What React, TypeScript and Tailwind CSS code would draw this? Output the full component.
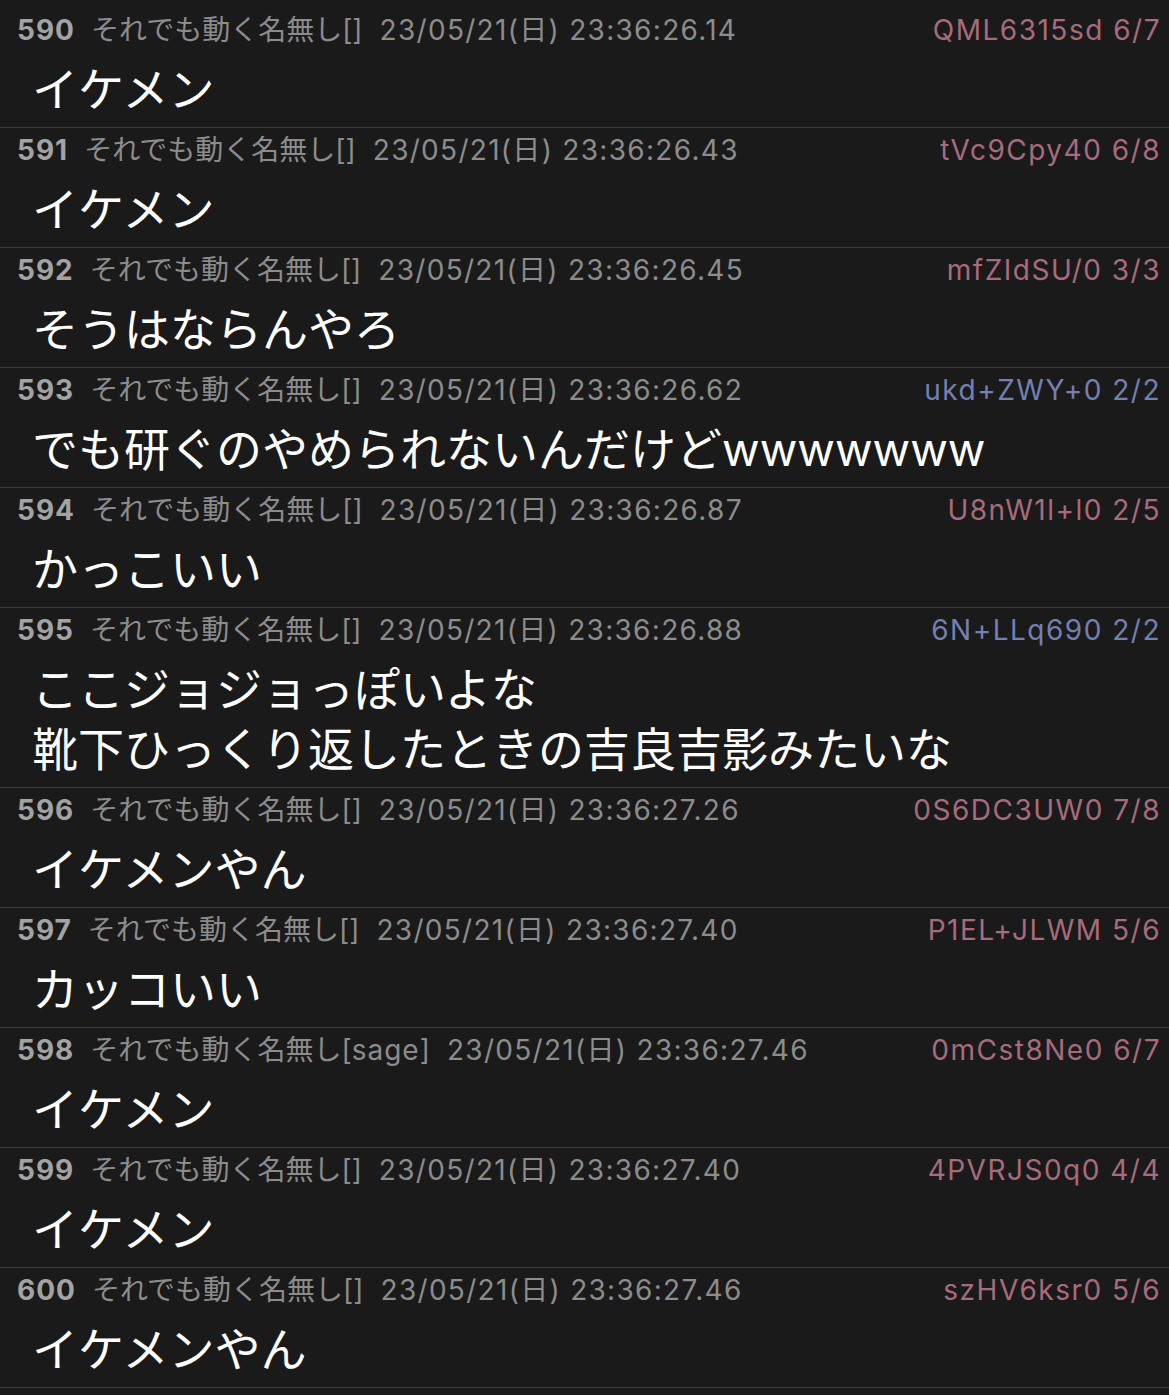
import React from "react";

type Post = {
  no: number;
  mail?: string;
  date: string;
  id: string;
  count: string;
  blue?: boolean;
  lines: string[];
};

const posts: Post[] = [
  { no: 590, date: "23/05/21(日) 23:36:26.14", id: "QML6315sd", count: "6/7", lines: ["イケメン"] },
  { no: 591, date: "23/05/21(日) 23:36:26.43", id: "tVc9Cpy40", count: "6/8", lines: ["イケメン"] },
  { no: 592, date: "23/05/21(日) 23:36:26.45", id: "mfZIdSU/0", count: "3/3", lines: ["そうはならんやろ"] },
  { no: 593, date: "23/05/21(日) 23:36:26.62", id: "ukd+ZWY+0", count: "2/2", blue: true, lines: ["でも研ぐのやめられないんだけどwwwwwww"] },
  { no: 594, date: "23/05/21(日) 23:36:26.87", id: "U8nW1l+l0", count: "2/5", lines: ["かっこいい"] },
  { no: 595, date: "23/05/21(日) 23:36:26.88", id: "6N+LLq690", count: "2/2", blue: true, lines: ["ここジョジョっぽいよな", "靴下ひっくり返したときの吉良吉影みたいな"] },
  { no: 596, date: "23/05/21(日) 23:36:27.26", id: "0S6DC3UW0", count: "7/8", lines: ["イケメンやん"] },
  { no: 597, date: "23/05/21(日) 23:36:27.40", id: "P1EL+JLWM", count: "5/6", lines: ["カッコいい"] },
  { no: 598, mail: "sage", date: "23/05/21(日) 23:36:27.46", id: "0mCst8Ne0", count: "6/7", lines: ["イケメン"] },
  { no: 599, date: "23/05/21(日) 23:36:27.40", id: "4PVRJS0q0", count: "4/4", lines: ["イケメン"] },
  { no: 600, date: "23/05/21(日) 23:36:27.46", id: "szHV6ksr0", count: "5/6", lines: ["イケメンやん"] },
];

const font = { fontFamily: "Inter, 'Noto Sans CJK JP', sans-serif" };

function Row({ p }: { p: Post }) {
  return (
    <div className="border-b border-[#3a3a3a] pt-[4px] pb-[8px]">
      <div className="flex h-[36px] items-center pl-[17px] pr-[8px] text-[28px] leading-[36px]">
        <span className="font-bold tracking-[1px] text-[#a3a3a3]">{p.no}</span>
        <span className="ml-[16px] text-[#8c8c8c]">
          それでも動く名無し[<span className="tracking-[1px]">{p.mail ?? ""}</span>]
        </span>
        <span className="ml-[17px] tracking-[1.3px] text-[#8c8c8c]">{p.date}</span>
        <span className={"ml-auto tracking-[1.5px] " + (p.blue ? "text-[#7280b3]" : "text-[#a86a7c]")}>
          {p.id} {p.count}
        </span>
      </div>
      <div className="mt-[11px] pl-[32px] text-[46px] leading-[60px] text-white">
        {p.lines.map((l, i) => (
          <div key={i} className="whitespace-nowrap">{l}</div>
        ))}
      </div>
    </div>
  );
}

export default function App() {
  return (
    <div className="min-h-[1395px] w-[1169px] bg-[#1a1a1a] pt-[8px]" style={font}>
      {posts.map((p) => (
        <Row key={p.no} p={p} />
      ))}
    </div>
  );
}
